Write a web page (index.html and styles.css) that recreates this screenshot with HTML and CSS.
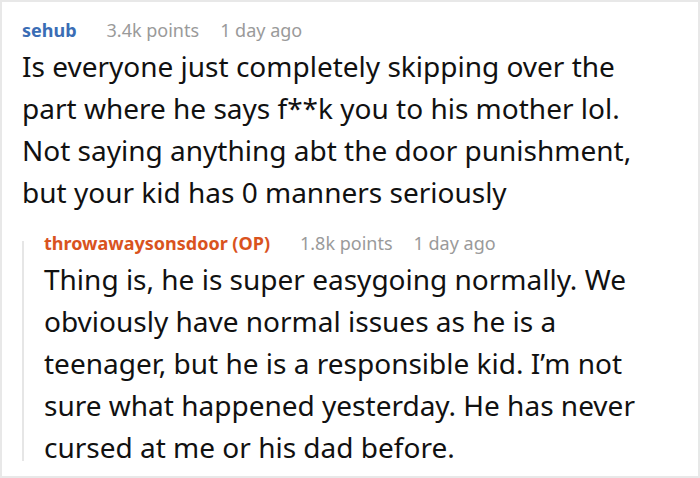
FILE: index.html
```html
<!DOCTYPE html>
<html>
<head>
<meta charset="utf-8">
<link rel="stylesheet" href="styles.css">
</head>
<body>
<div class="frame">
  <div class="comment">
    <div class="meta">
      <span class="user">sehub</span>
      <span class="points">3.4k points</span>
      <span class="time">1 day ago</span>
    </div>
    <p class="text">Is everyone just completely skipping over the part where he says f**k you to his mother lol. Not saying anything abt the door punishment, but your kid has 0 manners seriously</p>
    <div class="reply">
      <div class="rail"></div>
      <div class="reply-body">
        <div class="meta">
          <span class="user op">throwawaysonsdoor (OP)</span>
          <span class="points">1.8k points</span>
          <span class="time">1 day ago</span>
        </div>
        <p class="text">Thing is, he is super easygoing normally. We obviously have normal issues as he is a teenager, but he is a responsible kid. I’m not sure what happened yesterday. He has never cursed at me or his dad before.</p>
      </div>
    </div>
  </div>
</div>
</body>
</html>
```

FILE: styles.css
```css
html, body {
  margin: 0;
  padding: 0;
  background: #fff;
}
body {
  font-family: "Noto Sans", "Open Sans", sans-serif;
  color: #111;
}
.frame {
  width: 700px;
  height: 478px;
  box-sizing: border-box;
  border: 2px solid #e8e8e8;
  overflow: hidden;
}
.comment {
  padding: 16px 40px 0 20px;
}
.meta {
  display: flex;
  align-items: baseline;
  font-size: 18px;
  line-height: 24px;
  color: #9a9a9a;
  white-space: nowrap;
}
.user {
  font-weight: 700;
  color: #3a6db5;
  margin-right: 30px;
}
.user.op {
  color: #d9531e;
}
.points {
  margin-right: 21px;
}
.text {
  margin: 3px 0 0 0;
  font-size: 28px;
  line-height: 42px;
  color: #111;
}
.reply {
  display: flex;
  margin-top: 18px;
}
.rail {
  flex: 0 0 2px;
  background: #e6e6e6;
  margin: 10px 20px 7px 0;
}
.reply-body {
  flex: 1;
  min-width: 0;
}
```
